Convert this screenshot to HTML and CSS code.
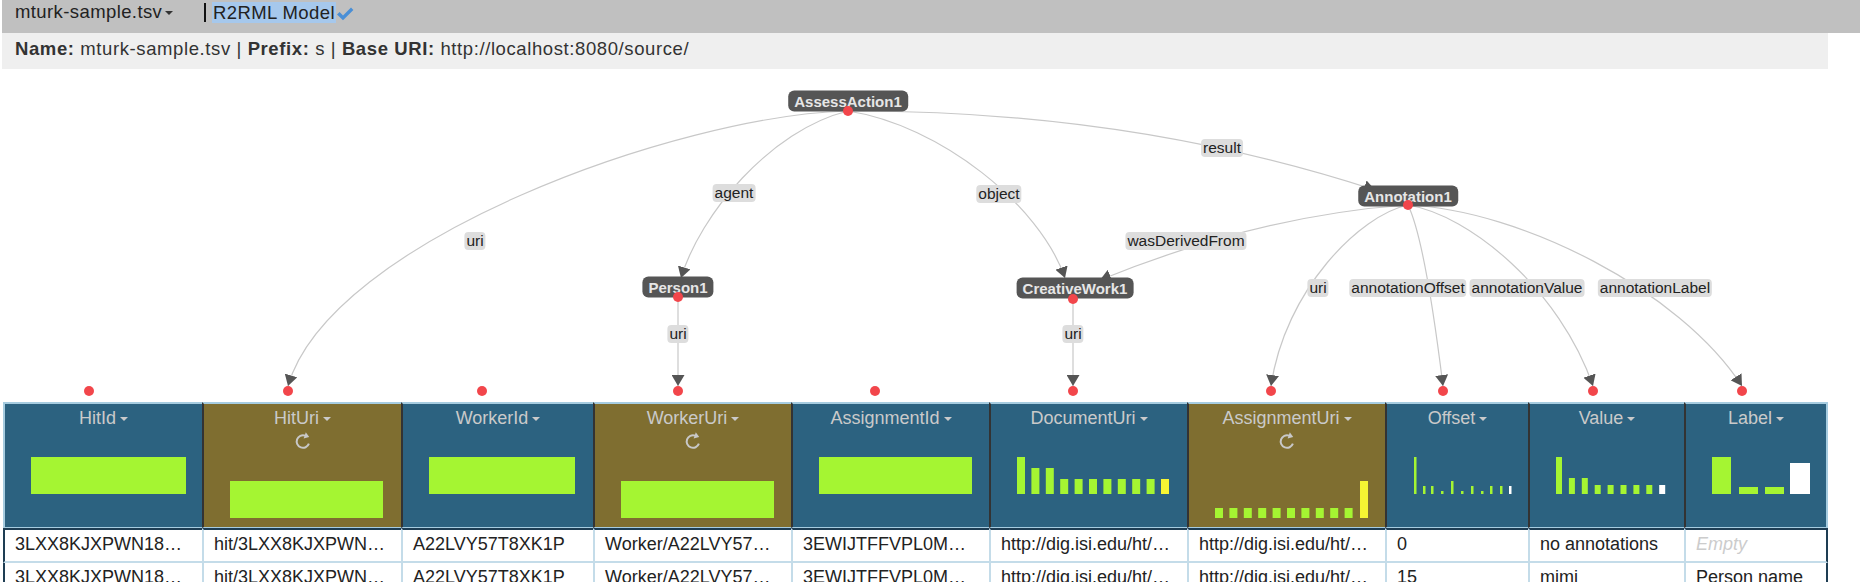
FILE: index.html
```html
<!DOCTYPE html>
<html lang="en">
  <head>
    <meta charset="UTF-8" />
    <meta name="viewport" content="width=device-width, initial-scale=1.0" />
    <title>mturk-sample.tsv</title>
    <link rel="stylesheet" href="styles.css">
  </head>
  <body>
    <div class="top-bar">
      <span class="file-name">mturk-sample.tsv<span class="caret"></span></span>
      <span class="cursor"></span>
      <span class="model-name">R2RML Model</span>
      <svg class="check" width="18" height="14" viewBox="0 0 18 14"><path d="M1 7.5 L3.6 5 L7 8.4 L15 0.5 L17.4 2.9 L7 13.3 Z" fill="#4a8fd6"/></svg>
    </div>
    <div class="info-bar"><b>Name:</b> mturk-sample.tsv | <b>Prefix:</b> s | <b>Base URI:</b> http://localhost:8080/source/</div>

    <div class="model-graph">
      <svg class="links" width="1860" height="333" viewBox="0 69 1860 333">
        <defs>
          <marker id="arrow" viewBox="0 0 11 13" refX="11" refY="6.5" markerWidth="11" markerHeight="13" markerUnits="userSpaceOnUse" orient="auto">
            <path d="M0,0 L11,6.5 L0,13 Z" fill="#555"/>
          </marker>
        </defs>
        <g fill="none" stroke="#c8c8c8" stroke-width="1.2">
          <path marker-end="url(#arrow)" d="M848,111 C680,115 330,240 288,386"/>
          <path marker-end="url(#arrow)" d="M848,111 C770,130 700,215 681,278"/>
          <path marker-end="url(#arrow)" d="M848,111 C940,125 1040,205 1065,278"/>
          <path marker-end="url(#arrow)" d="M848,111 Q1130,110 1375,190"/>
          <path marker-end="url(#arrow)" d="M1408,205 Q1260,215 1100,280"/>
          <path marker-end="url(#arrow)" d="M1408,205 C1360,215 1285,290 1271,386"/>
          <path marker-end="url(#arrow)" d="M1408,205 Q1425,240 1443,386"/>
          <path marker-end="url(#arrow)" d="M1408,205 C1470,215 1560,290 1593,386"/>
          <path marker-end="url(#arrow)" d="M1408,205 C1520,210 1680,290 1742,386"/>
          <path marker-end="url(#arrow)" d="M678,297 L678,386"/>
          <path marker-end="url(#arrow)" d="M1073,299 L1073,386"/>
        </g>
      </svg>

      <span class="edge-label" style="left:475px;top:172px">uri</span>
      <span class="edge-label" style="left:734px;top:124px">agent</span>
      <span class="edge-label" style="left:999px;top:125px">object</span>
      <span class="edge-label" style="left:1222px;top:79px">result</span>
      <span class="edge-label" style="left:1186px;top:172px">wasDerivedFrom</span>
      <span class="edge-label" style="left:678px;top:265px">uri</span>
      <span class="edge-label" style="left:1073px;top:265px">uri</span>
      <span class="edge-label" style="left:1318px;top:219px">uri</span>
      <span class="edge-label" style="left:1408px;top:219px">annotationOffset</span>
      <span class="edge-label" style="left:1527px;top:219px">annotationValue</span>
      <span class="edge-label" style="left:1655px;top:219px">annotationLabel</span>

      <span class="node-label" style="left:848px;top:32px">AssessAction1</span>
      <span class="node-label" style="left:678px;top:218px">Person1</span>
      <span class="node-label" style="left:1075px;top:219px">CreativeWork1</span>
      <span class="node-label" style="left:1408px;top:127px">Annotation1</span>

      <span class="dot" style="left:848px;top:42px"></span>
      <span class="dot" style="left:678px;top:228px"></span>
      <span class="dot" style="left:1073px;top:230px"></span>
      <span class="dot" style="left:1408px;top:136px"></span>

      <span class="dot" style="left:89px;top:322px"></span>
      <span class="dot" style="left:288px;top:322px"></span>
      <span class="dot" style="left:482px;top:322px"></span>
      <span class="dot" style="left:678px;top:322px"></span>
      <span class="dot" style="left:875px;top:322px"></span>
      <span class="dot" style="left:1073px;top:322px"></span>
      <span class="dot" style="left:1271px;top:322px"></span>
      <span class="dot" style="left:1443px;top:322px"></span>
      <span class="dot" style="left:1593px;top:322px"></span>
      <span class="dot" style="left:1742px;top:322px"></span>
    </div>

    <div class="worksheet">
      <div class="ws-header">
        <div class="col-head">
          <div class="col-title">HitId<span class="caret"></span></div>
          <svg class="hist" width="155" height="37"><rect class="g" x="0" y="0" width="155" height="37"/></svg>
        </div>
        <div class="col-head mapped">
          <div class="col-title">HitUri<span class="caret"></span></div>
          <div class="refresh-row"><svg width="18" height="18" viewBox="0 0 18 18"><path d="M14.9 11.7 A6.3 6.3 0 1 1 11.15 3.6" fill="none" stroke="#c8c8c8" stroke-width="2"/><path d="M15.2 4.9 L9.6 6.6 L11.8 0.3 Z" fill="#c8c8c8"/></svg></div>
          <svg class="hist" width="153" height="37"><rect class="g" x="0" y="0" width="153" height="37"/></svg>
        </div>
        <div class="col-head">
          <div class="col-title">WorkerId<span class="caret"></span></div>
          <svg class="hist" width="146" height="37"><rect class="g" x="0" y="0" width="146" height="37"/></svg>
        </div>
        <div class="col-head mapped">
          <div class="col-title">WorkerUri<span class="caret"></span></div>
          <div class="refresh-row"><svg width="18" height="18" viewBox="0 0 18 18"><path d="M14.9 11.7 A6.3 6.3 0 1 1 11.15 3.6" fill="none" stroke="#c8c8c8" stroke-width="2"/><path d="M15.2 4.9 L9.6 6.6 L11.8 0.3 Z" fill="#c8c8c8"/></svg></div>
          <svg class="hist" width="153" height="37"><rect class="g" x="0" y="0" width="153" height="37"/></svg>
        </div>
        <div class="col-head">
          <div class="col-title">AssignmentId<span class="caret"></span></div>
          <svg class="hist" width="153" height="37"><rect class="g" x="0" y="0" width="153" height="37"/></svg>
        </div>
        <div class="col-head">
          <div class="col-title">DocumentUri<span class="caret"></span></div>
          <svg class="hist" width="153" height="37">
            <rect class="g" x="0" y="0" width="8" height="37"/>
            <rect class="g" x="14.4" y="11" width="8" height="26"/>
            <rect class="g" x="28.8" y="11" width="8" height="26"/>
            <rect class="g" x="43.2" y="22" width="8" height="15"/>
            <rect class="g" x="57.6" y="22" width="8" height="15"/>
            <rect class="g" x="72" y="22" width="8" height="15"/>
            <rect class="g" x="86.4" y="22" width="8" height="15"/>
            <rect class="g" x="100.8" y="22" width="8" height="15"/>
            <rect class="g" x="115.2" y="22" width="8" height="15"/>
            <rect class="g" x="129.6" y="22" width="8" height="15"/>
            <rect class="y" x="144" y="22" width="8" height="15"/>
          </svg>
        </div>
        <div class="col-head mapped">
          <div class="col-title">AssignmentUri<span class="caret"></span></div>
          <div class="refresh-row"><svg width="18" height="18" viewBox="0 0 18 18"><path d="M14.9 11.7 A6.3 6.3 0 1 1 11.15 3.6" fill="none" stroke="#c8c8c8" stroke-width="2"/><path d="M15.2 4.9 L9.6 6.6 L11.8 0.3 Z" fill="#c8c8c8"/></svg></div>
          <svg class="hist" width="155" height="37">
            <rect class="g" x="0" y="27" width="8" height="10"/>
            <rect class="g" x="14.4" y="27" width="8" height="10"/>
            <rect class="g" x="28.8" y="27" width="8" height="10"/>
            <rect class="g" x="43.2" y="27" width="8" height="10"/>
            <rect class="g" x="57.6" y="27" width="8" height="10"/>
            <rect class="g" x="72" y="27" width="8" height="10"/>
            <rect class="g" x="86.4" y="27" width="8" height="10"/>
            <rect class="g" x="100.8" y="27" width="8" height="10"/>
            <rect class="g" x="115.2" y="27" width="8" height="10"/>
            <rect class="g" x="129.6" y="27" width="8" height="10"/>
            <rect class="y" x="145" y="0" width="8" height="37"/>
          </svg>
        </div>
        <div class="col-head">
          <div class="col-title">Offset<span class="caret"></span></div>
          <svg class="hist" width="99" height="37">
            <rect class="g" x="1" y="0" width="2.5" height="37"/>
            <rect class="g" x="10" y="29" width="2.5" height="8"/>
            <rect class="g" x="18" y="29" width="2.5" height="8"/>
            <rect class="g" x="28" y="34" width="2.5" height="3"/>
            <rect class="g" x="38" y="24" width="2.5" height="13"/>
            <rect class="g" x="48" y="34" width="2.5" height="3"/>
            <rect class="g" x="58" y="29" width="2.5" height="8"/>
            <rect class="g" x="68" y="34" width="2.5" height="3"/>
            <rect class="g" x="77" y="29" width="2.5" height="8"/>
            <rect class="g" x="87" y="29" width="2.5" height="8"/>
            <rect class="w" x="96" y="29" width="2.5" height="8"/>
          </svg>
        </div>
        <div class="col-head">
          <div class="col-title">Value<span class="caret"></span></div>
          <svg class="hist" width="112" height="37">
            <rect class="g" x="0" y="0" width="6" height="37"/>
            <rect class="g" x="12.9" y="21" width="6" height="16"/>
            <rect class="g" x="25.8" y="21" width="6" height="16"/>
            <rect class="g" x="38.7" y="28" width="6" height="9"/>
            <rect class="g" x="51.6" y="28" width="6" height="9"/>
            <rect class="g" x="64.5" y="28" width="6" height="9"/>
            <rect class="g" x="77.4" y="28" width="6" height="9"/>
            <rect class="g" x="90.3" y="28" width="6" height="9"/>
            <rect class="w" x="103.2" y="28" width="6" height="9"/>
          </svg>
        </div>
        <div class="col-head">
          <div class="col-title">Label<span class="caret"></span></div>
          <svg class="hist" width="100" height="37">
            <rect class="g" x="0" y="0" width="19" height="37"/>
            <rect class="g" x="27" y="30" width="19" height="7"/>
            <rect class="g" x="53" y="30" width="19" height="7"/>
            <rect class="w" x="78" y="6" width="20" height="31"/>
          </svg>
        </div>
      </div>

      <div class="ws-row first-row">
        <div class="cell">3LXX8KJXPWN18…</div>
        <div class="cell">hit/3LXX8KJXPWN…</div>
        <div class="cell">A22LVY57T8XK1P</div>
        <div class="cell">Worker/A22LVY57…</div>
        <div class="cell">3EWIJTFFVPL0M…</div>
        <div class="cell">http://dig.isi.edu/ht/…</div>
        <div class="cell">http://dig.isi.edu/ht/…</div>
        <div class="cell">0</div>
        <div class="cell">no annotations</div>
        <div class="cell empty">Empty</div>
      </div>
      <div class="ws-row">
        <div class="cell">3LXX8KJXPWN18…</div>
        <div class="cell">hit/3LXX8KJXPWN…</div>
        <div class="cell">A22LVY57T8XK1P</div>
        <div class="cell">Worker/A22LVY57…</div>
        <div class="cell">3EWIJTFFVPL0M…</div>
        <div class="cell">http://dig.isi.edu/ht/…</div>
        <div class="cell">http://dig.isi.edu/ht/…</div>
        <div class="cell">15</div>
        <div class="cell">mimi</div>
        <div class="cell">Person name</div>
      </div>
    </div>
  </body>
</html>
```

FILE: styles.css
```css
body {
  margin: 0;
  font-family: "Liberation Sans", Arial, sans-serif;
  font-size: 18px;
  color: #222;
  background: #fff;
  overflow: hidden;
}

/* top bar */

.top-bar {
  display: flex;
  align-items: flex-start;
  height: 33px;
  box-sizing: border-box;
  margin-left: 2px;
  padding: 2px 0 0 13px;
  font-size: 18.5px;
  letter-spacing: 0.4px;
  line-height: 20px;
  background-color: #c0c0c0;
}

.file-name {
  width: 189px;
  white-space: nowrap;
}

.caret {
  display: inline-block;
  margin-left: 3px;
  vertical-align: middle;
  border-top: 4px solid #333;
  border-left: 4px solid transparent;
  border-right: 4px solid transparent;
}

.cursor {
  width: 2px;
  height: 19px;
  margin-top: 1px;
  background-color: #111;
}

.model-name {
  margin: 0 0 0 6px;
  padding: 0 1px;
  line-height: 21px;
  background-color: #a6c8ec;
}

.check {
  margin-top: 5px;
}

.info-bar {
  height: 36px;
  box-sizing: border-box;
  margin: 0 32px 0 2px;
  padding: 6px 13px 0;
  font-size: 18.5px;
  letter-spacing: 0.6px;
  line-height: 20px;
  white-space: nowrap;
  color: #333;
  background-color: #efefef;
}

/* model graph */

.model-graph {
  position: relative;
  height: 333px;
}

.links {
  position: absolute;
  left: 0;
  top: 0;
}

.edge-label,
.node-label,
.dot {
  position: absolute;
}

.edge-label {
  transform: translate(-50%, -50%);
  padding: 0 2px;
  font-size: 15.5px;
  line-height: 18px;
  white-space: nowrap;
  color: #222;
  background-color: #ddd;
  border-radius: 4px;
}

.node-label {
  transform: translate(-50%, -50%);
  padding: 1px 6px;
  font-size: 15px;
  font-weight: bold;
  line-height: 19px;
  white-space: nowrap;
  color: #e6e6e6;
  background-color: #555;
  border-radius: 6px;
}

.dot {
  width: 10px;
  height: 10px;
  margin: -5px 0 0 -5px;
  border-radius: 50%;
  background-color: #f2464b;
}

/* worksheet table */

.worksheet {
  margin: 0 32px 0 3px;
}

.ws-header,
.ws-row {
  display: grid;
  grid-template-columns: 199px 199px 192px 198px 198px 198px 198px 143px 156px 144px;
}

.col-head {
  height: 126px;
  box-sizing: border-box;
  padding-top: 3px;
  border-top: 2px solid #a6cce0;
  border-bottom: 1px solid #a6cce0;
  border-left: 2px solid #333;
  text-align: center;
  color: #cacaca;
  background-color: #2c6280;
}

.col-head:first-child {
  border-left-color: #a6cce0;
}

.col-head:last-child {
  border-right: 2px solid #a6cce0;
}

.col-head.mapped {
  background-color: #7f6e30;
}

.col-title {
  line-height: 22px;
  white-space: nowrap;
}

.col-title .caret {
  margin-left: 4px;
  border-top-color: #cacaca;
}

.refresh-row {
  display: flex;
  align-items: center;
  justify-content: center;
  height: 24px;
}

.hist {
  display: block;
  margin: 28px 0 0 26px;
}

.hist .g {
  fill: #a5f532;
}

.hist .y {
  fill: #f6f533;
}

.hist .w {
  fill: #fff;
}

.cell {
  height: 33px;
  box-sizing: border-box;
  padding: 0 10px;
  line-height: 29px;
  white-space: nowrap;
  overflow: hidden;
  border-left: 2px solid #c4dce9;
  border-bottom: 2px solid #c4dce9;
}

.first-row .cell {
  height: 35px;
  border-top: 2px solid #1e3d53;
}

.cell:first-child {
  border-left-color: #1e3d53;
}

.cell:last-child {
  border-right: 2px solid #1e3d53;
}

.empty {
  font-style: italic;
  color: #ccc;
}
```
